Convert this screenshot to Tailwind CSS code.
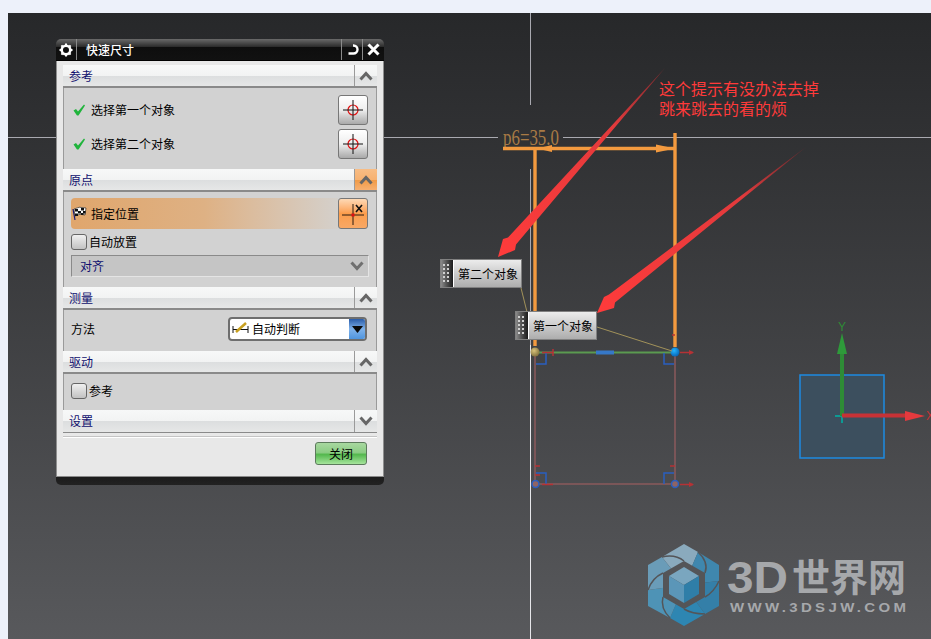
<!DOCTYPE html>
<html lang="zh">
<head>
<meta charset="utf-8">
<script src="https://cdn.jsdelivr.net/npm/@tailwindcss/browser@4"></script>
</head>
<body class="w-[931px] h-[639px] overflow-hidden bg-[#edf1fa] pl-[8px] pt-[13px] font-['Noto_Sans_CJK_SC',sans-serif] text-[12px] leading-none text-black">
<main class="relative w-[923px] h-[626px] bg-gradient-to-b from-[#27282a] to-[#58595c]">

  <!-- CAD canvas -->
  <svg class="absolute left-[-8px] top-[-13px]" width="931" height="639" viewBox="0 0 931 639" fill="none">
    <defs>
      <linearGradient id="a1" gradientUnits="userSpaceOnUse" x1="665" y1="68" x2="498" y2="257"><stop offset="0" stop-color="#7a2a2e"/><stop offset=".3" stop-color="#e23a3c"/><stop offset="1" stop-color="#ff3b3b"/></linearGradient>
      <linearGradient id="a2" gradientUnits="userSpaceOnUse" x1="806" y1="147" x2="597" y2="313"><stop offset="0" stop-color="#5e2a2e"/><stop offset=".3" stop-color="#e23a3c"/><stop offset="1" stop-color="#ff3b3b"/></linearGradient>
      <radialGradient id="b1" cx=".4" cy=".35" r=".7"><stop offset="0" stop-color="#d8c27a"/><stop offset="1" stop-color="#7d6c3c"/></radialGradient>
      <radialGradient id="b2" cx=".4" cy=".35" r=".7"><stop offset="0" stop-color="#22b5ff"/><stop offset="1" stop-color="#0660b0"/></radialGradient>
    </defs>
    <!-- crosshair -->
    <path d="M8 137.500H498M563 137.500H931" stroke="#a9a9b0"/>
    <path d="M530.500 13V105M530.500 169V345" stroke="#a9a9b0"/>
    <path d="M530.500 345V639" stroke="#e6e6ea"/>
    <!-- dimension -->
    <text x="503" y="145" textLength="56" lengthAdjust="spacingAndGlyphs" font-family="Liberation Serif" font-size="23" fill="#a87a45">p6=35.0</text>
    <g stroke="#f39a3f" stroke-width="3.400">
      <path d="M535 149V346M675 133V347M503 148.500H675"/>
    </g>
    <path d="M537 148.500L552 145V152ZM656 144.500L675 148.500L656 152.500Z" fill="#f39a3f"/>
    <!-- sketch -->
    <g stroke="#8a5a5c" stroke-width="1.500">
      <path d="M535 356V484M675 356V484M535 484H675"/>
    </g>
    <path d="M535 352.500H675" stroke="#5b9a50" stroke-width="2"/>
    <path d="M596 352.500H614" stroke="#3678c8" stroke-width="4"/>
    <g stroke="#2a5fc0" stroke-width="1.500">
      <path d="M536 364H546V353M664 353V364H674M536 473H546V484M664 484V473H674"/>
    </g>
    <g stroke="#b53235" stroke-width="1.500">
      <path d="M542 352.500H553M553 349V356M680 352.500H693M553 484.500H542M680 484.500H693M535 466H540M675 466H670M535 475H540M675 335H672"/>
    </g>
    <path d="M689 350L694 352.500L689 355ZM689 482L694 484.500L689 487Z" fill="#b53235"/>
    <circle cx="535" cy="352" r="4.500" fill="url(#b1)"/>
    <circle cx="675" cy="352" r="4.500" fill="url(#b2)"/>
    <circle cx="535.500" cy="484" r="3.500" fill="#8f6464" stroke="#2a5fc0" stroke-width="1.500"/>
    <circle cx="675" cy="484" r="3.500" fill="#8f6464" stroke="#2a5fc0" stroke-width="1.500"/>
    <path d="M521 288L527 312M597 327L672 351" stroke="#a2925a"/>
    <!-- red callout arrows -->
    <path d="M665 68L516 244.500L515 250L498 257L503 239L508 237.500Z" fill="url(#a1)"/>
    <path d="M806 147L615 302.500L614 308L597 313L604 297L609 294.500Z" fill="url(#a2)"/>
    <!-- csys -->
    <rect x="800" y="375" width="84" height="83" fill="#3c4f5e" stroke="#1d8be2" stroke-width="1.500"/>
    <path d="M835 416H842V423" stroke="#0d9a94" stroke-width="2"/>
    <path d="M842 416V350" stroke="#2e8b36" stroke-width="4"/>
    <path d="M842 333L847 354H837Z" fill="#2e9a3a"/>
    <path d="M842 415.500H905" stroke="#c73236" stroke-width="4"/>
    <path d="M905 411L925 416L905 421Z" fill="#e53a3e"/>
    <text x="838" y="331" font-family="Liberation Sans" font-size="12" fill="#2e8b36">Y</text>
    <text x="926" y="420" font-family="Liberation Sans" font-size="12" fill="#c73236">X</text>
    <!-- logo -->
    <path d="M684 585L662 557L684 544L698 552Z" fill="#8aaabd"/>
    <path d="M684 585L698 552L719 565V581Z" fill="#3f87ae"/>
    <path d="M684 585L719 581V606L705 614Z" fill="#347fa8"/>
    <path d="M684 585L705 614L684 626L670 618Z" fill="#2e86b2"/>
    <path d="M684 585L670 618L648 606V590Z" fill="#4e93b6"/>
    <path d="M684 585L648 590V565L662 557Z" fill="#6a9cb8"/>
    <g stroke="#545558" stroke-width="1.500">
      <path d="M698 552Q709 562 705 573M719 581Q714 592 705 597M705 614Q692 614 684 609M670 618Q660 608 663 597M648 590Q652 578 663 573M662 557Q675 554 684 561"/>
    </g>
    <path d="M684 561L705 573V597L684 609L663 597V573Z" fill="#545558"/>
    <path d="M684 567L699 576L684 585L669 576Z" fill="#7aa6bf"/>
    <path d="M669 576L684 585V603L669 594Z" fill="#5b96b8"/>
    <path d="M699 576L684 585V603L699 594Z" fill="#2f7ea8"/>
    <text x="727" y="593" font-family="Liberation Sans" font-weight="700" font-size="45" fill="#a6a8ab" textLength="61" lengthAdjust="spacingAndGlyphs">3D</text>
    <text x="792" y="591" font-family="Noto Sans CJK SC" font-weight="700" font-size="38" fill="#a6a8ab" textLength="114">世界网</text>
    <text transform="translate(730 612) scale(1.2 1)" font-family="Liberation Sans" font-weight="700" font-size="12.500" letter-spacing="2.800" fill="#a6a8ab">WWW.3DSJW.COM</text>
  </svg>

  <!-- annotation -->
  <p class="absolute left-[651px] top-[65px] text-[16px] leading-[20px] font-normal text-[#ff3a3a]">这个提示有没办法去掉<br>跳来跳去的看的烦</p>

  <!-- tooltips -->
  <div class="absolute left-[432px] top-[246px] flex w-[82px] h-[29px] border border-[#808080] bg-gradient-to-b from-[#ececec] to-[#adadad]">
    <span class="flex w-[13px] items-center justify-center border-r border-white bg-gradient-to-r from-[#8a8a8a] to-[#1c1c1c]">
      <svg width="8" height="19" viewBox="0 0 8 19" fill="#d0d0d0"><path d="M0 0h2v2H0zM4 0h2v2H4zM0 4h2v2H0zM4 4h2v2H4zM0 8h2v2H0zM4 8h2v2H4zM0 12h2v2H0zM4 12h2v2H4zM0 16h2v2H0zM4 16h2v2H4z"/></svg>
    </span>
    <span class="flex-1 pl-[4px] self-center">第二个对象</span>
  </div>
  <div class="absolute left-[507px] top-[298px] flex w-[82px] h-[29px] border border-[#808080] bg-gradient-to-b from-[#ececec] to-[#adadad]">
    <span class="flex w-[13px] items-center justify-center border-r border-white bg-gradient-to-r from-[#8a8a8a] to-[#1c1c1c]">
      <svg width="8" height="19" viewBox="0 0 8 19" fill="#d0d0d0"><path d="M0 0h2v2H0zM4 0h2v2H4zM0 4h2v2H0zM4 4h2v2H4zM0 8h2v2H0zM4 8h2v2H4zM0 12h2v2H0zM4 12h2v2H4zM0 16h2v2H0zM4 16h2v2H4z"/></svg>
    </span>
    <span class="flex-1 pl-[4px] self-center">第一个对象</span>
  </div>

  <!-- dialog -->
  <section class="absolute left-[48px] top-[26px] flex w-[328px] h-[446px] flex-col">
    <header class="flex h-[22px] items-center rounded-t-[5px] border-b border-black bg-[linear-gradient(#6a6a6a,#2a2a2a_38%,#0e0e0e_40%,#111)] text-white">
      <span class="flex w-[21px] h-full items-center justify-center border-r border-[#8a8a8a]">
        <svg width="14" height="14" viewBox="0 0 14 14"><circle cx="7" cy="7" r="4.300" fill="none" stroke="#fff" stroke-width="2.600"/><path d="M7 .5V3M7 11v2.500M.5 7H3M11 7h2.500M2.400 2.400l1.800 1.800M9.800 9.800l1.800 1.800M11.600 2.400L9.800 4.200M4.200 9.800l-1.800 1.800" stroke="#fff" stroke-width="2"/></svg>
      </span>
      <h1 class="flex-1 pl-[9px] text-[12px] font-medium">快速尺寸</h1>
      <span class="flex w-[22px] h-full items-center justify-center border-x border-[#8a8a8a]">
        <svg width="13" height="13" viewBox="0 0 13 13" fill="none"><path d="M7 2.500H7.500a4 4 0 0 1 0 8H2.500" stroke="#fff" stroke-width="2.400"/></svg>
      </span>
      <span class="flex w-[21px] h-full items-center justify-center">
        <svg width="13" height="13" viewBox="0 0 13 13"><path d="M1.500 1.500L11.500 11.500M11.500 1.500L1.500 11.500" stroke="#fff" stroke-width="3"/></svg>
      </span>
    </header>

    <div class="flex flex-1 flex-col border-x border-[#8f8f8f] bg-[#e8e8e8] px-[6px] pt-[4px]">
      <!-- 参考 -->
      <div class="flex h-[23px] items-stretch border-b-2 border-[#8a8a8a] bg-[linear-gradient(#f7f8f8,#f2f3f3_50%,#dcdedf_52%,#e6e7e7)]">
        <span class="flex-1 pl-[6px] pt-[5px] text-[#10106e]">参考</span>
        <span class="flex w-[23px] items-center justify-center border-l border-[#9a9a9a]"><svg width="14" height="10" viewBox="0 0 14 10" fill="none"><path d="M1.500 8.500L7 2.500L12.500 8.500" stroke="#666" stroke-width="3"/></svg></span>
      </div>
      <div class="flex h-[81px] flex-col border-x border-[#9a9a9a] bg-[#d2d2d2] pl-[7px] pr-[8px] pt-[7px] gap-[4px]">
        <div class="flex h-[30px] items-center">
          <svg class="ml-[2px]" width="12" height="12" viewBox="0 0 12 12"><path d="M.5 6.500L3 5L5 7.500L11 .5L12 1.500L5.500 11.500H4Z" fill="#20b43c"/></svg>
          <span class="ml-[6px] flex-1">选择第一个对象</span>
          <span class="flex w-[30px] h-[30px] items-center justify-center rounded-[3px] border border-[#777] bg-gradient-to-b from-white via-[#eee] to-[#a9a9a9]">
            <svg width="22" height="22" viewBox="0 0 22 22" fill="none"><circle cx="11" cy="11" r="5" stroke="#e01010" stroke-width="1.200"/><path d="M11 1V21M1 11H21" stroke="#111"/></svg>
          </span>
        </div>
        <div class="flex h-[30px] items-center">
          <svg class="ml-[2px]" width="12" height="12" viewBox="0 0 12 12"><path d="M.5 6.500L3 5L5 7.500L11 .5L12 1.500L5.500 11.500H4Z" fill="#20b43c"/></svg>
          <span class="ml-[6px] flex-1">选择第二个对象</span>
          <span class="flex w-[30px] h-[30px] items-center justify-center rounded-[3px] border border-[#777] bg-gradient-to-b from-white via-[#eee] to-[#a9a9a9]">
            <svg width="22" height="22" viewBox="0 0 22 22" fill="none"><circle cx="11" cy="11" r="5" stroke="#e01010" stroke-width="1.200"/><path d="M11 1V21M1 11H21" stroke="#111"/></svg>
          </span>
        </div>
      </div>

      <!-- 原点 -->
      <div class="flex h-[23px] items-stretch border-b-2 border-[#8a8a8a] bg-[linear-gradient(#f7f8f8,#f2f3f3_50%,#dcdedf_52%,#e6e7e7)]">
        <span class="flex-1 pl-[6px] pt-[5px] text-[#10106e]">原点</span>
        <span class="flex w-[23px] items-center justify-center border-l border-[#9a9a9a] bg-[linear-gradient(#f8bd85,#f7b272_50%,#f09a45_52%,#f7b070)]"><svg width="14" height="10" viewBox="0 0 14 10" fill="none"><path d="M1.500 8.500L7 2.500L12.500 8.500" stroke="#666" stroke-width="3"/></svg></span>
      </div>
      <div class="flex h-[95px] flex-col border-x border-[#9a9a9a] bg-[#d2d2d2] px-[7px] pt-[6px]">
        <div class="flex h-[31px]">
          <div class="flex w-[267px] items-center rounded-l-[4px] bg-gradient-to-r from-[#e0a66c] via-[#deb184] to-[#d4d0cb] pl-[1px]">
            <svg width="15" height="15" viewBox="0 0 15 15"><path d="M1 3L3 14" stroke="#1a1a7a" stroke-width="1.200"/><path d="M2 3Q7 0 14 2L13 9Q8 7 3 10Z" fill="#fff" stroke="#111" stroke-width=".6"/><path d="M3 3h3v2.500H3zM9 2h3v2.500H9zM6 5h3v2.500H6zM11 5h2.500v2.500H11zM3 7.500h3V10H3zM9 7h2.500v2H9z" fill="#111"/></svg>
            <span class="ml-[4px]">指定位置</span>
          </div>
          <span class="flex w-[30px] items-center justify-center rounded-[3px] border border-[#777] bg-gradient-to-b from-[#fdd9b5] via-[#fb9d4c] to-[#f8a865]">
            <svg width="24" height="24" viewBox="0 0 24 24" fill="none"><path d="M12 2V23M1 13H23" stroke="#2a1a10"/><rect x="10.500" y="11.500" width="3" height="3" fill="#e01010"/><path d="M15 3L21 10M21 3L15 10" stroke="#111" stroke-width="1.600"/></svg>
          </span>
        </div>
        <label class="mt-[5px] flex h-[16px] items-center">
          <span class="w-[16px] h-[16px] rounded-[3px] border border-[#666] bg-gradient-to-b from-[#f0f0f0] to-[#c2c2c2]"></span>
          <span class="ml-[2px]">自动放置</span>
        </label>
        <div class="mt-[5px] flex h-[22px] w-[298px] items-center border border-[#8a8a8a] border-r-[#e4e4e4] border-b-[#e4e4e4] bg-[#c5c5c5] pl-[8px] pr-[4px]">
          <span class="flex-1 text-[#10106e]">对齐</span>
          <svg width="14" height="10" viewBox="0 0 14 10" fill="none"><path d="M1.500 1.500L7 7.500L12.500 1.500" stroke="#707070" stroke-width="3"/></svg>
        </div>
      </div>

      <!-- 测量 -->
      <div class="flex h-[23px] items-stretch border-b-2 border-[#8a8a8a] bg-[linear-gradient(#f7f8f8,#f2f3f3_50%,#dcdedf_52%,#e6e7e7)]">
        <span class="flex-1 pl-[6px] pt-[5px] text-[#10106e]">测量</span>
        <span class="flex w-[23px] items-center justify-center border-l border-[#9a9a9a]"><svg width="14" height="10" viewBox="0 0 14 10" fill="none"><path d="M1.500 8.500L7 2.500L12.500 8.500" stroke="#666" stroke-width="3"/></svg></span>
      </div>
      <div class="flex h-[41px] items-center border-x border-[#9a9a9a] bg-[#d2d2d2] pl-[7px] pr-[9px] pb-[3px]">
        <span class="flex-1">方法</span>
        <div class="flex w-[139px] h-[24px] items-center overflow-hidden rounded-[4px] border-2 border-[#6e6e6e] bg-white pl-[2px]">
          <svg width="17" height="14" viewBox="0 0 17 14" fill="none"><path d="M1 4V11M16 4V11M1 7.500H16" stroke="#111"/><path d="M4 10L14 1" stroke="#c8a020" stroke-width="2.500"/></svg>
          <span class="ml-[3px] flex-1">自动判断</span>
          <span class="flex w-[16px] h-full items-center justify-center bg-gradient-to-b from-[#2a5ca8] via-[#7fb2ea] to-[#4f95de]">
            <svg width="11" height="7" viewBox="0 0 11 7"><path d="M0 0H11L5.500 7Z" fill="#0a0a0a"/></svg>
          </span>
        </div>
      </div>

      <!-- 驱动 -->
      <div class="flex h-[23px] items-stretch border-b-2 border-[#8a8a8a] bg-[linear-gradient(#f7f8f8,#f2f3f3_50%,#dcdedf_52%,#e6e7e7)]">
        <span class="flex-1 pl-[6px] pt-[5px] text-[#10106e]">驱动</span>
        <span class="flex w-[23px] items-center justify-center border-l border-[#9a9a9a]"><svg width="14" height="10" viewBox="0 0 14 10" fill="none"><path d="M1.500 8.500L7 2.500L12.500 8.500" stroke="#666" stroke-width="3"/></svg></span>
      </div>
      <label class="flex h-[36px] items-center border-x border-[#9a9a9a] bg-[#d2d2d2] pl-[7px] pb-[3px]">
        <span class="w-[16px] h-[16px] rounded-[3px] border border-[#666] bg-gradient-to-b from-[#f0f0f0] to-[#c2c2c2]"></span>
        <span class="ml-[2px]">参考</span>
      </label>

      <!-- 设置 -->
      <div class="flex h-[23px] items-stretch border-b border-[#8a8a8a] bg-[linear-gradient(#f7f8f8,#f2f3f3_50%,#dcdedf_52%,#e6e7e7)]">
        <span class="flex-1 pl-[6px] pt-[5px] text-[#10106e]">设置</span>
        <span class="flex w-[23px] items-center justify-center border-l border-[#9a9a9a]"><svg width="14" height="10" viewBox="0 0 14 10" fill="none"><path d="M1.500 1.500L7 7.500L12.500 1.500" stroke="#666" stroke-width="3"/></svg></span>
      </div>

      <div class="mt-[3px] border-t border-[#c4c4c4] shadow-[0_1px_0_#fff]"></div>
      <div class="mt-[5px] flex justify-end pr-[10px]">
        <button class="w-[52px] h-[23px] rounded-[3px] border border-[#5c7a5c] bg-[linear-gradient(#a8d8a0,#8ccc84_45%,#54b84e_55%,#a6e49c)]">关闭</button>
      </div>
    </div>
    <div class="h-[9px] rounded-b-[5px] border-t border-[#8a8a8a] bg-gradient-to-b from-[#1c1c1c] to-[#222]"></div>
  </section>
</main>
</body>
</html>
